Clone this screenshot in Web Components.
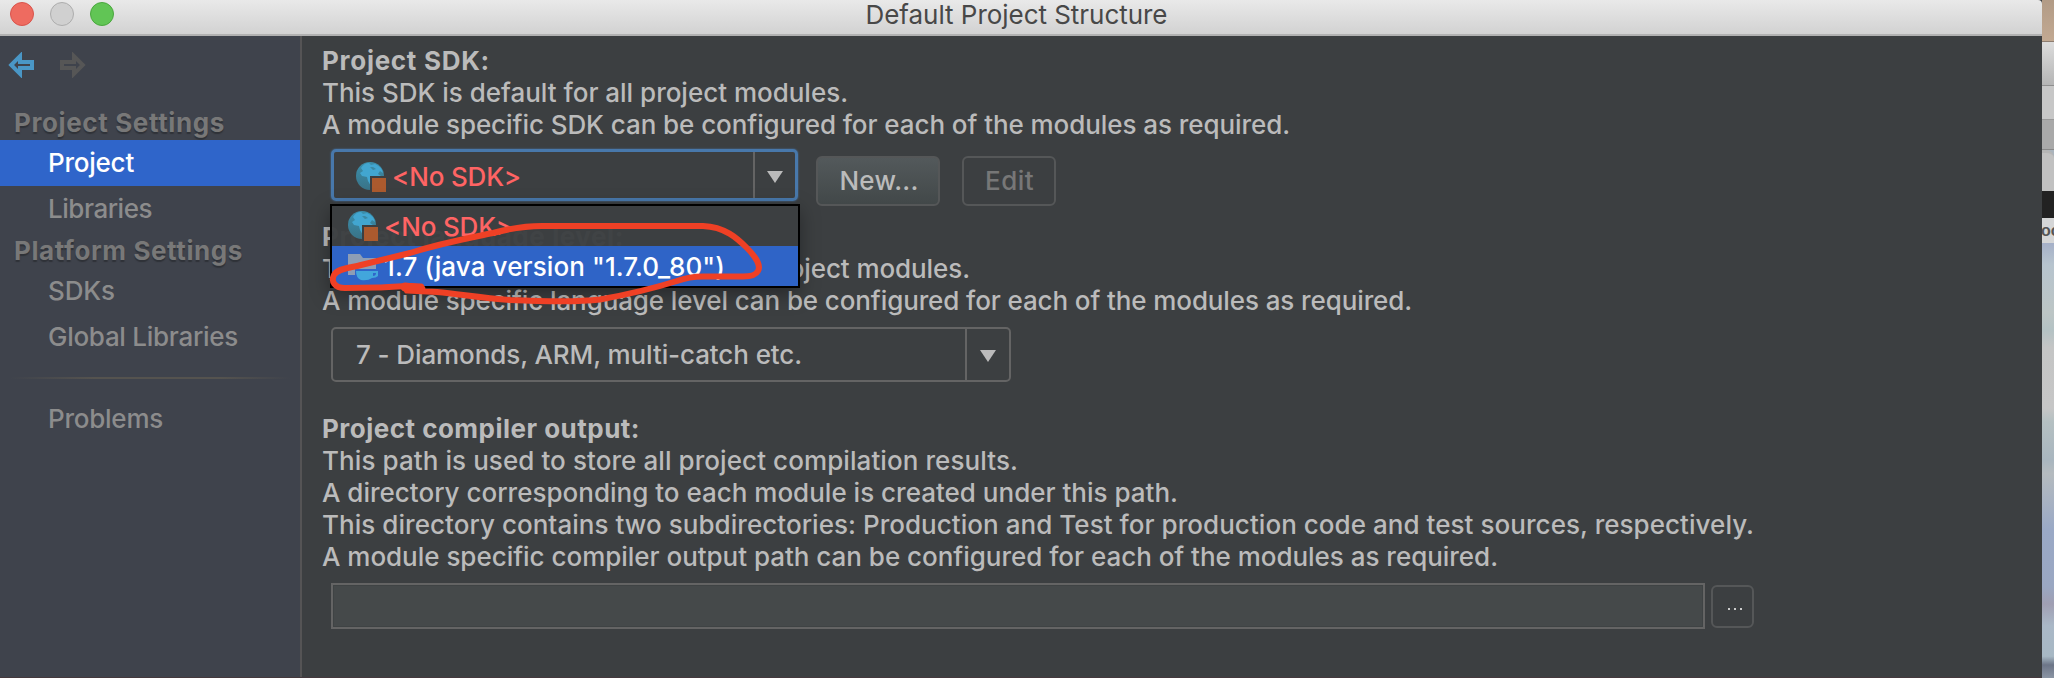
<!DOCTYPE html>
<html lang="en">
<head>
<meta charset="utf-8">
<title>Default Project Structure</title>
<style>
body { margin: 0; background: #aab4bd; overflow: hidden; }
</style>
</head>
<body>
<project-structure-app></project-structure-app>

<template id="t-app">
<style>
:host { display: flex; position: relative; width: 2054px; height: 678px; overflow: hidden; font: 450 26px/32px Inter, "Liberation Sans", sans-serif; color: #bbb; }
.window { box-sizing: border-box; width: 2042px; height: 678px; display: flex; flex-direction: column; background: #3c3f41; border-bottom: 1px solid #45393d; }
.body { flex: 1; display: flex; min-height: 0; }
main { flex: 1; padding: 9px 0 0 20px; display: flex; flex-direction: column; }
.sdk { display: flex; align-items: flex-start; height: 72px; padding: 8px 0 0 9px; }
.sdk ui-button { margin-top: 7px; }
.new { margin-left: 18px; }
.edit { margin-left: 22px; }
.level { padding: 10px 0 31px 9px; height: 55px; }
.out { display: flex; padding: 10px 0 0 9px; }
.field { box-sizing: border-box; width: 1374px; height: 46px; border: 2px solid #646464; background: #45494a; box-shadow: inset 0 0 0 1px #3f4344; }
.browse { margin: 2px 0 0 6px; }
</style>
<div class="window">
  <title-bar><fit-text w="302">Default Project Structure</fit-text></title-bar>
  <div class="body">
    <nav-panel></nav-panel>
    <main>
      <fit-text w="168" bold>Project SDK:</fit-text>
      <fit-text w="526">This SDK is default for all project modules.</fit-text>
      <fit-text w="968">A module specific SDK can be configured for each of the modules as required.</fit-text>
      <div class="sdk">
        <combo-box focused style="--w:467px;--h:52px;--pad:22px;--cell:42px">
          <sdk-icon style="margin-top:4px"></sdk-icon><fit-text w="129" style="color:#ff6464;margin:3px 0 0 6px">&lt;No SDK&gt;</fit-text>
        </combo-box>
        <ui-button class="new" style="--w:124px;--h:50px;--bg:linear-gradient(#53595b,#424849)"><fit-text w="79" style="margin-left:2px">New...</fit-text></ui-button>
        <ui-button class="edit" style="--w:94px;--h:50px"><fit-text w="49" style="color:#777;margin-left:1px">Edit</fit-text></ui-button>
      </div>
      <fit-text w="302" bold>Project language level:</fit-text>
      <fit-text w="648">This language level is default for all project modules.</fit-text>
      <fit-text w="1090">A module specific language level can be configured for each of the modules as required.</fit-text>
      <div class="level">
        <combo-box style="--w:680px;--h:55px;--pad:23px;--cell:44px"><fit-text w="446">7 - Diamonds, ARM, multi-catch etc.</fit-text></combo-box>
      </div>
      <fit-text w="318" bold>Project compiler output:</fit-text>
      <fit-text w="696">This path is used to store all project compilation results.</fit-text>
      <fit-text w="856">A directory corresponding to each module is created under this path.</fit-text>
      <fit-text w="1432">This directory contains two subdirectories: Production and Test for production code and test sources, respectively.</fit-text>
      <fit-text w="1176">A module specific compiler output path can be configured for each of the modules as required.</fit-text>
      <div class="out">
        <div class="field"></div>
        <ui-button class="browse" style="--w:43px;--h:43px"><svg width="14" height="2" style="margin:5px 0 0 4px"><path d="M0 0h2v2H0zM6 0h2v2H6zM12 0h2v2h-2z" fill="#ccc"/></svg></ui-button>
      </div>
    </main>
  </div>
</div>
<desktop-edge></desktop-edge>
<sdk-popup></sdk-popup>
<pen-mark></pen-mark>
</template>

<template id="t-title">
<style>
:host { display: flex; box-sizing: border-box; height: 36px; justify-content: center; position: relative; background: linear-gradient(#e9e9e9,#d2d2d2); border-bottom: 2px solid #b1b1b1; border-radius: 0 4px 0 0; color: #484848; font-weight: 400; }
.lights { position: absolute; left: 10px; top: 2px; display: flex; gap: 16px; }
i { box-sizing: border-box; width: 24px; height: 24px; border-radius: 50%; border: 1px solid; }
::slotted(*) { margin-left: -9px; height: 29px; line-height: 29px; }
</style>
<div class="lights"><i style="background:#ee6b60;border-color:#d9534b"></i><i style="background:#d0d0d0;border-color:#adadad"></i><i style="background:#61c555;border-color:#4aa73e"></i></div>
<slot></slot>
</template>

<template id="t-nav">
<style>
:host { display: flex; flex-direction: column; width: 300px; background: #3f434c; border-right: 2px solid #555455; color: #8c8c8c; }
.tools { display: flex; height: 55px; padding: 16px 0 0 8px; gap: 26px; }
.head { height: 33px; padding-left: 14px; color: #787878; text-shadow: 0 2px 1px #2f3238; }
.second { margin-top: 3px; }
.item { height: 46px; display: flex; align-items: center; padding-left: 48px; }
.sel { background: #2f65ca; color: #fff; }
hr { width: 280px; height: 2px; border: 0; margin: 17px 10px; background: linear-gradient(90deg,transparent,#55534f 30%,#55534f 75%,transparent); }
</style>
<div class="tools">
  <svg width="26" height="26"><path d="M3.2 13 12 4.2V10h12v6H12v5.8Z" fill="none" stroke="#4a97c6" stroke-width="4"/></svg>
  <svg width="26" height="26"><path d="M22.8 13 14 4.2V10H2v6h12v5.8Z" fill="none" stroke="#565656" stroke-width="4"/></svg>
</div>
<div class="head"><fit-text w="211" bold>Project Settings</fit-text></div>
<div class="item sel"><fit-text w="86">Project</fit-text></div>
<div class="item"><fit-text w="104">Libraries</fit-text></div>
<div class="head second"><fit-text w="229" bold>Platform Settings</fit-text></div>
<div class="item"><fit-text w="67">SDKs</fit-text></div>
<div class="item"><fit-text w="190">Global Libraries</fit-text></div>
<hr>
<div class="item"><fit-text w="115">Problems</fit-text></div>
</template>

<template id="t-combo">
<style>
:host { display: flex; box-sizing: border-box; width: var(--w); height: var(--h); border: 2px solid #646464; border-radius: 5px; }
:host([focused]) { border: 3px solid #4878ab; box-shadow: 0 0 2px #4878ab; }
.value { flex: 1; display: flex; align-items: center; padding-left: var(--pad); }
.cell { box-sizing: border-box; width: var(--cell); border-left: 2px solid #646464; display: flex; align-items: center; justify-content: center; }
svg { margin-top: 3px; }
</style>
<div class="value"><slot></slot></div>
<div class="cell"><svg width="16" height="12"><path d="M0 0H16L8 12Z" fill="#bbb"/></svg></div>
</template>

<template id="t-button">
<style>
:host { display: flex; box-sizing: border-box; width: var(--w); height: var(--h); border: 2px solid #555758; border-radius: 6px; background: var(--bg, none); align-items: center; justify-content: center; }
</style>
<slot></slot>
</template>

<template id="t-sdk-icon">
<style>:host { display: block; width: 30px; height: 30px; flex: none; } svg { display: block; }</style>
<svg width="30" height="30">
  <defs><linearGradient id="g" x1="0" y1="0" x2="0" y2="1"><stop offset="0" stop-color="#3b8fac"/><stop offset="1" stop-color="#397387"/></linearGradient></defs>
  <circle cx="14" cy="14" r="14" fill="url(#g)"/>
  <path d="M5 6Q8 1 13 1L15 3 19 2Q26 5 27 11L24 9 22 12 25 14V20H17L15 24 12 19 11 15 6 14 4 11 7 9ZM14 5 17 8 20 7 17 5Z" fill="#42a6d0"/>
  <path d="M14 14H30V30H14Z" fill="#3c3f41"/><path d="M16 16H30V30H16Z" fill="#ab5a2e"/>
</svg>
</template>

<template id="t-popup">
<style>
:host { display: block; position: absolute; left: 330px; top: 204px; width: 466px; height: 80px; border: 2px solid #000; background: rgba(60,63,65,.97); box-shadow: 0 6px 18px rgba(0,0,0,.35); }
.row { display: flex; align-items: center; height: 40px; padding-left: 16px; }
.row fit-text { margin: 1px 0 0 6px; }
.sel { background: rgba(47,101,202,.98); color: #fff; }
</style>
<div class="row" style="color:#ff6464"><sdk-icon></sdk-icon><fit-text w="129">&lt;No SDK&gt;</fit-text></div>
<div class="row sel">
  <svg width="30" height="30"><path d="M0 3H12L15 7H28V24H0Z" fill="#8d9db5"/><path d="M7 18H30V27H7Z" fill="#2f65ca"/><path d="M8 20H30V25Q28 27 24 27 20 30 13 29 8 27 8 20ZM25 22V25Q28 25 28 22Z" fill="#42a6dc" fill-rule="evenodd"/></svg>
  <fit-text w="341">1.7 (java version "1.7.0_80")</fit-text>
</div>
</template>

<template id="t-pen">
<style>:host { display: block; position: absolute; left: 320px; top: 210px; } svg { display: block; }</style>
<svg width="460" height="110" viewBox="320 210 460 110" fill="none" stroke="#ef4025" stroke-width="6" stroke-linecap="round" stroke-linejoin="round">
<path d="M421 286.500C405 285 395 287 378 287.500L345 288C334 288 331 281 334 275C338 268 350 268 361 265L410 253C445 242 470 238 493 233C512 228 525 226 542 226H703C725 227 737 238 747 248C756 257 761 266 758 271C756 275 752 276.500 743 276.500H706C692 276 685 278 677 281C645 291 625 295 600 299.500C580 302 545 301.500 510 300C480 298 460 294 437 292L407 290.500"/>
<path d="M405 287L421 289" stroke-width="9"/>
</svg>
</template>

<template id="t-edge">
<style>
:host { display: flex; flex-direction: column; width: 12px; height: 678px; box-shadow: inset 1px 0 0 #909192; }
div { box-sizing: border-box; flex: none; overflow: hidden; }
.word { height: 25px; background: #d5d6d7; color: #555; font: bold 16px/25px "Liberation Sans", sans-serif; text-indent: -1px; }
</style>
<div style="height:42px;background:linear-gradient(#b29b86,#c2a992);border-bottom:1px solid #8d7d70"></div>
<div style="height:44px;background:linear-gradient(#dcdcdc,#b5b5b5);border-bottom:1px solid #8f8f8f"></div>
<div style="height:34px;background:#c7c7c7;border-bottom:1px solid #999"></div>
<div style="height:30px;background:#a9a9a9;border-bottom:1px solid #888"></div>
<div style="height:41px;background:#c1c1c1;border-top:3px solid #b5b5b5;border-radius:0 8px 0 0"></div>
<div style="height:27px;background:#222"></div>
<div class="word">oo</div>
<div style="height:435px;background:linear-gradient(#a5b0c8,#b7c4ce 5%,#bcc5c5 16%,#b4c2c4 20%,#c4c5c5 24%,#c6c6c6 38%,#b5c0c2 41%,#a9b6bf 50%,#b5bbbf 53%,#9aa9c6 66%,#9aa7c2 79%,#a09fb3 83%,#aab8c7 88%,#a7b8c4 95%,#6c7587 97%,#8b95a4)"></div>
</template>

<script>
const define = (name, templateId) => customElements.define(name, class extends HTMLElement {
  constructor() {
    super();
    this.attachShadow({ mode: 'open' }).append(document.getElementById(templateId).content.cloneNode(true));
  }
});

// One line of text whose tracking is adjusted to fill the width given in "w".
customElements.define('fit-text', class extends HTMLElement {
  constructor() {
    super();
    this.attachShadow({ mode: 'open' }).innerHTML =
      '<style>:host{display:block;height:32px;line-height:32px;white-space:nowrap;flex:none}:host([bold]){font-weight:700}span{display:inline-block}</style><span><slot></slot></span>';
  }
  fit() {
    const span = this.shadowRoot.querySelector('span');
    const natural = span.getBoundingClientRect().width;
    span.style.letterSpacing = (this.getAttribute('w') - natural) / this.textContent.length + 'px';
  }
});
define('sdk-icon', 't-sdk-icon');
define('ui-button', 't-button');
define('combo-box', 't-combo');
define('title-bar', 't-title');
define('nav-panel', 't-nav');
define('sdk-popup', 't-popup');
define('pen-mark', 't-pen');
define('desktop-edge', 't-edge');
define('project-structure-app', 't-app');

const fitAll = root => root.querySelectorAll('*').forEach(el => {
  if (el.fit) el.fit();
  else if (el.shadowRoot) fitAll(el.shadowRoot);
});
fitAll(document);
</script>
</body>
</html>
